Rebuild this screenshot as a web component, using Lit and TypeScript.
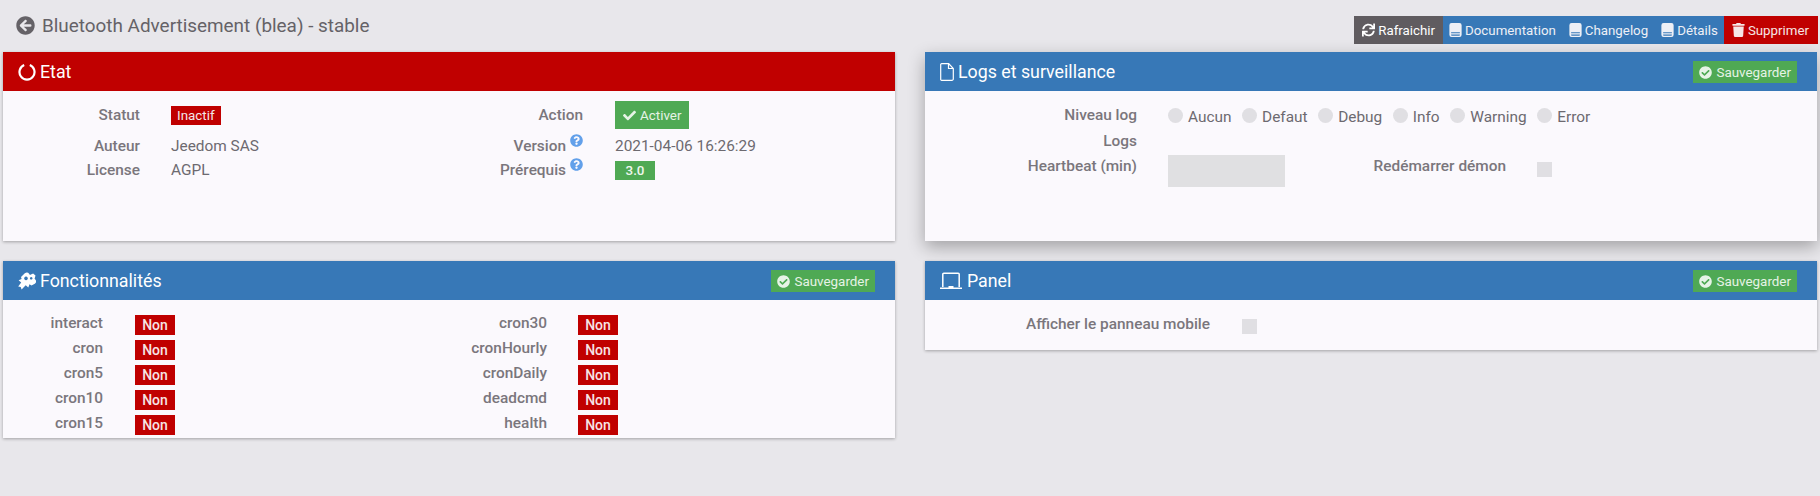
import { LitElement, css, html, svg } from "lit";
import { customElement } from "lit/decorators.js";

const icon = (box: string, body: unknown, cls = "") =>
  html`<svg class="ico ${cls}" viewBox=${box} fill="currentColor" aria-hidden="true">${body}</svg>`;

const P = {
  back: "M256 504C119 504 8 393 8 256S119 8 256 8s248 111 248 248-111 248-248 248zm28.9-143.6L209.4 288H392c13.3 0 24-10.7 24-24v-16c0-13.3-10.7-24-24-24H209.4l75.5-72.4c9.7-9.3 9.9-24.8.4-34.3l-11-10.9c-9.4-9.4-24.6-9.4-33.9 0L107.7 239c-9.4 9.4-9.4 24.6 0 33.9l132.7 132.7c9.4 9.4 24.6 9.4 33.9 0l11-10.9c9.5-9.5 9.3-25-.4-34.3z",
  check: "M173.898 439.404l-166.4-166.4c-9.997-9.997-9.997-26.206 0-36.204l36.203-36.204c9.997-9.998 26.207-9.998 36.204 0L192 312.69 432.095 72.596c9.997-9.997 26.207-9.997 36.204 0l36.203 36.204c9.997 9.997 9.997 26.206 0 36.204l-294.4 294.401c-9.998 9.997-26.207 9.997-36.204-.001z",
  checkCircle: "M504 256c0 136.967-111.033 248-248 248S8 392.967 8 256 119.033 8 256 8s248 111.033 248 248zM227.314 387.314l184-184c6.248-6.248 6.248-16.379 0-22.627l-22.627-22.627c-6.248-6.249-16.379-6.249-22.628 0L216 308.118l-70.059-70.059c-6.248-6.248-16.379-6.248-22.628 0l-22.627 22.627c-6.248 6.248-6.248 16.379 0 22.627l104 104c6.249 6.249 16.379 6.249 22.628.001z",
  question: "M504 256c0 136.997-111.043 248-248 248S8 392.997 8 256C8 119.083 119.043 8 256 8s248 111.083 248 248zM262.655 90c-54.497 0-89.255 22.957-116.549 63.758-3.536 5.286-2.353 12.415 2.715 16.258l34.699 26.31c5.205 3.947 12.621 3.008 16.665-2.122 17.864-22.658 30.113-35.797 57.303-35.797 20.429 0 45.698 13.148 45.698 32.958 0 14.976-12.363 22.667-32.534 33.976C247.128 238.528 216 254.941 216 296v4c0 6.627 5.373 12 12 12h56c6.627 0 12-5.373 12-12v-1.333c0-28.462 83.186-29.647 83.186-106.667 0-58.002-60.165-102-116.531-102zM256 338c-25.365 0-46 20.635-46 46 0 25.364 20.635 46 46 46s46-20.636 46-46c0-25.365-20.635-46-46-46z",
  sync: "M440.65 12.57l4 82.77A247.16 247.16 0 0 0 255.83 8C134.73 8 33.91 94.92 12.29 209.82A12 12 0 0 0 24.09 224h49.05a12 12 0 0 0 11.67-9.26 175.91 175.91 0 0 1 317-56.94l-101.46-4.86a12 12 0 0 0-12.57 12v47.41a12 12 0 0 0 12 12H500a12 12 0 0 0 12-12V12a12 12 0 0 0-12-12h-47.37a12 12 0 0 0-11.98 12.57zM255.83 432a175.61 175.61 0 0 1-146-77.8l101.8 4.87a12 12 0 0 0 12.57-12v-47.4a12 12 0 0 0-12-12H12a12 12 0 0 0-12 12V500a12 12 0 0 0 12 12h47.35a12 12 0 0 0 12-12.6l-4.15-82.57A247.17 247.17 0 0 0 255.83 504c121.11 0 221.93-86.92 243.55-201.82a12 12 0 0 0-11.8-14.18h-49.05a12 12 0 0 0-11.67 9.26A175.86 175.86 0 0 1 255.83 432z",
  trash: "M432 32H312l-9.4-18.7A24 24 0 0 0 281.1 0H166.8a23.72 23.72 0 0 0-21.4 13.3L136 32H16A16 16 0 0 0 0 48v32a16 16 0 0 0 16 16h416a16 16 0 0 0 16-16V48a16 16 0 0 0-16-16zM53.2 467a48 48 0 0 0 47.9 45h245.8a48 48 0 0 0 47.9-45L416 128H32z",
};

const back = () => icon("0 0 512 512", svg`<path d=${P.back}></path>`);
const check = () => icon("0 0 512 512", svg`<path d=${P.check}></path>`);
const checkCircle = () => icon("0 0 512 512", svg`<path d=${P.checkCircle}></path>`);
const question = () => icon("0 0 512 512", svg`<path d=${P.question}></path>`, "help");
const sync = () => icon("0 0 512 512", svg`<path d=${P.sync}></path>`);
const trash = () => icon("0 0 448 512", svg`<path d=${P.trash}></path>`);
const book = () =>
  icon("0 0 14 16", svg`<path fill-rule="evenodd" d="M2.500 0h9A2.500 2.500 0 0 1 14 2.500v11a2.500 2.500 0 0 1-2.500 2.500h-9A2.500 2.500 0 0 1 0 13.500v-11A2.500 2.500 0 0 1 2.500 0zM2 10.500v1.300h10v-1.300zM2 13v.8c0 .4.3.700.700.700h8.600c.4 0 .700-.3.700-.700V13z"></path>`);
const ring = () =>
  icon("0 0 18 18", svg`<path d="M6.200 2.100A7.500 7.500 0 1 0 11.800 2.100" fill="none" stroke="currentColor" stroke-width="2.200"></path>`);
const file = () =>
  icon("0 0 14 18", svg`<path d="M1.800.700h6.900l4.600 4.800v10.400a1.400 1.400 0 0 1-1.400 1.400H1.800a1.100 1.100 0 0 1-1.100-1.400V2.100A1.100 1.100 0 0 1 1.800.700zM8.500.700v4.800h4.800" fill="none" stroke="currentColor" stroke-width="1.200"></path>`, "file");
const laptop = () =>
  icon("0 0 22 18", svg`<path d="M2.800 15V2.200a1 1 0 0 1 1-1h14.400a1 1 0 0 1 1 1V15" fill="none" stroke="currentColor" stroke-width="1.500"></path><path d="M0 15.500h8.500V14h5v1.500H22V17H0z"></path>`, "wide");
const rocket = () =>
  icon("0 0 18 18", svg`<path fill-rule="evenodd" d="M6.800 1.300a3.200 3.200 0 0 1 4.500.6l.6 1 3.200-1.400 2.400 1.900-.9 3.300.9 1a3 3 0 0 1-.7 4l-3.300 1.700-2-1.200-1.200 3.200-2.600-2.200L3.600 17.500 2.700 15l-2.500-.6 3-3.800L.6 8.300l3-1.200-.6-2.200zM8 4.600a1.800 1.800 0 1 0 .01 0zM13.200 5a1.300 1.300 0 1 0 .01 0z"></path>`);

@customElement("app-root")
export class AppRoot extends LitElement {
  static styles = css`
    :host {
      display: block;
      min-height: 496px;
      background: #e8e7eb;
      color: #6d6a70;
      font-family: Roboto, "Liberation Sans", sans-serif;
      font-size: 15.4px;
      box-sizing: border-box;
      padding: 0 3px;
    }
    .ico {
      width: 1em;
      height: 1em;
      flex: none;
    }
    .top {
      display: flex;
      justify-content: space-between;
      height: 52px;
    }
    .title {
      display: flex;
      align-items: center;
      gap: 7px;
      height: 50px;
      padding-left: 13px;
      font-size: 18.9px;
      color: #656267;
    }
    .title .ico {
      width: 19px;
      height: 19px;
    }
    .actions {
      display: flex;
      height: 28px;
      margin: 16px -1px 0 0;
      font-size: 13.3px;
      color: #eef0f6;
    }
    .act {
      display: flex;
      align-items: center;
      gap: 3px;
    }
    .act .ico {
      width: 13px;
      height: 14px;
    }
    .gray { background: #605c60; padding: 0 8px; color: #fff; }
    .blue { background: #3778b7; padding: 0 6px; }
    .blue + .blue { padding-left: 7px; }
    .red { background: #c00000; padding: 0 9px 0 8px; color: #f6e6e6; }
    .grid {
      display: grid;
      grid-template-columns: 892px 892px;
      column-gap: 30px;
      row-gap: 20px;
      align-items: start;
    }
    .panel {
      background: #fbf9fd;
      box-shadow: 0 1px 3px rgba(0, 0, 0, 0.3);
    }
    .panel.raised {
      box-shadow: 0 6px 16px rgba(0, 0, 0, 0.3);
    }
    .head {
      display: flex;
      align-items: center;
      justify-content: space-between;
      height: 39px;
      padding: 0 20px 0 15px;
      background: #3778b7;
      color: #fff;
      font-size: 17.8px;
    }
    .head.danger {
      background: #c00000;
    }
    .head-title {
      display: flex;
      align-items: center;
      gap: 4px;
    }
    .head-title .ico {
      width: 18px;
      height: 18px;
    }
    .head-title .ico.wide {
      width: 22px;
      margin-right: 1px;
    }
    .head-title .ico.file {
      width: 14px;
    }
    .save {
      display: flex;
      align-items: center;
      gap: 4px;
      height: 22px;
      margin-top: 1px;
      padding: 0 6px;
      background: #4fa954;
      color: #e6f3e6;
      font-size: 13.4px;
    }
    .save .ico {
      width: 13px;
      height: 13px;
    }
    .etat { height: 150px; display: grid; grid-template-columns: 444px 1fr; padding-top: 10px; box-sizing: border-box; }
    .func { height: 138px; display: grid; grid-template-columns: 444px 1fr; padding-top: 15px; box-sizing: border-box; }
    .logs { height: 150px; padding-top: 15px; box-sizing: border-box; }
    .mobile { height: 50px; padding-top: 15px; box-sizing: border-box; }
    .row {
      display: grid;
      grid-template-columns: 137px 1fr;
      column-gap: 31px;
      align-items: center;
    }
    .label {
      justify-self: end;
      display: flex;
      align-items: flex-start;
      font-weight: 500;
      color: #7a767c;
    }
    .help {
      width: 13px;
      height: 13px;
      margin: -3px 0 0 4px;
      color: #62a0ea;
    }
    .etat .row { height: 24px; }
    .etat .row.first { height: 28px; margin-bottom: 5px; }
    .etat .alt .row { grid-template-columns: 136px 1fr; column-gap: 32px; }
    .badge {
      display: inline-flex;
      align-items: center;
      justify-content: center;
      height: 19px;
      font-size: 13.4px;
      color: #f3e6e8;
      background: #c00000;
      width: fit-content;
      padding: 0 6px;
    }
    .badge.ok {
      width: 40px;
      padding: 0;
      background: #4fa954;
      color: #eff7ef;
      font-weight: 500;
    }
    .activate {
      display: flex;
      align-items: center;
      gap: 4px;
      width: fit-content;
      height: 28px;
      padding: 0 8px;
      background: #4fa954;
      color: #e6f3e6;
      font-size: 13.4px;
    }
    .activate .ico {
      width: 13px;
      height: 13px;
    }
    .func .row {
      height: 25px;
      grid-template-columns: 100px 1fr;
      column-gap: 32px;
      align-items: start;
    }
    .func .alt .row {
      column-gap: 31px;
    }
    .func .label {
      line-height: 16px;
    }
    .non {
      display: flex;
      align-items: center;
      justify-content: center;
      width: 40px;
      height: 20px;
      background: #c00000;
      color: #f6e3e5;
      font-size: 14px;
      font-weight: 500;
    }
    .logs .row {
      grid-template-columns: 212px 1fr;
      align-items: start;
    }
    .logs .label {
      line-height: 18px;
    }
    .levels-row { height: 26px; }
    .logs-row { height: 23px; }
    .hb-row .label {
      margin-top: 2px;
    }
    .levels {
      display: flex;
      gap: 10.6px;
    }
    .level {
      display: flex;
      gap: 5px;
      line-height: 22px;
      height: 18px;
    }
    .radio {
      width: 15px;
      height: 15px;
      border-radius: 50%;
      background: #e0dfe3;
      margin-top: 2px;
    }
    .hb {
      display: flex;
      align-items: flex-start;
    }
    .input {
      width: 117px;
      height: 32px;
      background: #e0e0e2;
    }
    .hb-label {
      width: 221px;
      margin: 2px 31px 0 0;
      text-align: right;
      font-weight: 500;
      color: #7a767c;
      line-height: 18px;
    }
    .box {
      width: 15px;
      height: 15px;
      background: #e0dfe3;
      margin-top: 7px;
    }
    .mobile .row {
      grid-template-columns: 285px 1fr;
      column-gap: 32px;
      align-items: start;
    }
    .mobile .label {
      line-height: 18px;
    }
    .mobile .box {
      margin-top: 4px;
    }
  `;

  private crons(names: string[]) {
    return names.map(
      (n) => html`<div class="row"><span class="label">${n}</span><span class="non">Non</span></div>`
    );
  }

  render() {
    const levels = ["Aucun", "Defaut", "Debug", "Info", "Warning", "Error"];
    return html`
      <div class="top">
        <div class="title">${back()}<span>Bluetooth Advertisement (blea) - stable</span></div>
        <div class="actions">
          <span class="act gray">${sync()}Rafraichir</span>
          <span class="act blue">${book()}Documentation</span>
          <span class="act blue">${book()}Changelog</span>
          <span class="act blue">${book()}Détails</span>
          <span class="act red">${trash()}Supprimer</span>
        </div>
      </div>
      <div class="grid">
        <section class="panel">
          <div class="head danger"><span class="head-title">${ring()}Etat</span></div>
          <div class="etat">
            <div>
              <div class="row first"><span class="label">Statut</span><span class="badge">Inactif</span></div>
              <div class="row"><span class="label">Auteur</span><span>Jeedom SAS</span></div>
              <div class="row"><span class="label">License</span><span>AGPL</span></div>
            </div>
            <div class="alt">
              <div class="row first"><span class="label">Action</span><span class="activate">${check()}Activer</span></div>
              <div class="row"><span class="label">Version${question()}</span><span>2021-04-06 16:26:29</span></div>
              <div class="row"><span class="label">Prérequis${question()}</span><span class="badge ok">3.0</span></div>
            </div>
          </div>
        </section>
        <section class="panel raised">
          <div class="head">
            <span class="head-title">${file()}Logs et surveillance</span>
            <span class="save">${checkCircle()}Sauvegarder</span>
          </div>
          <div class="logs">
            <div class="row levels-row">
              <span class="label">Niveau log</span>
              <div class="levels">
                ${levels.map((l) => html`<span class="level"><span class="radio"></span>${l}</span>`)}
              </div>
            </div>
            <div class="row logs-row"><span class="label">Logs</span><span></span></div>
            <div class="row hb-row">
              <span class="label">Heartbeat (min)</span>
              <div class="hb">
                <span class="input"></span>
                <span class="hb-label">Redémarrer démon</span>
                <span class="box"></span>
              </div>
            </div>
          </div>
        </section>
        <section class="panel">
          <div class="head">
            <span class="head-title">${rocket()}Fonctionnalités</span>
            <span class="save">${checkCircle()}Sauvegarder</span>
          </div>
          <div class="func">
            <div>${this.crons(["interact", "cron", "cron5", "cron10", "cron15"])}</div>
            <div class="alt">${this.crons(["cron30", "cronHourly", "cronDaily", "deadcmd", "health"])}</div>
          </div>
        </section>
        <section class="panel">
          <div class="head">
            <span class="head-title">${laptop()}Panel</span>
            <span class="save">${checkCircle()}Sauvegarder</span>
          </div>
          <div class="mobile">
            <div class="row"><span class="label">Afficher le panneau mobile</span><span class="box"></span></div>
          </div>
        </section>
      </div>
    `;
  }
}
